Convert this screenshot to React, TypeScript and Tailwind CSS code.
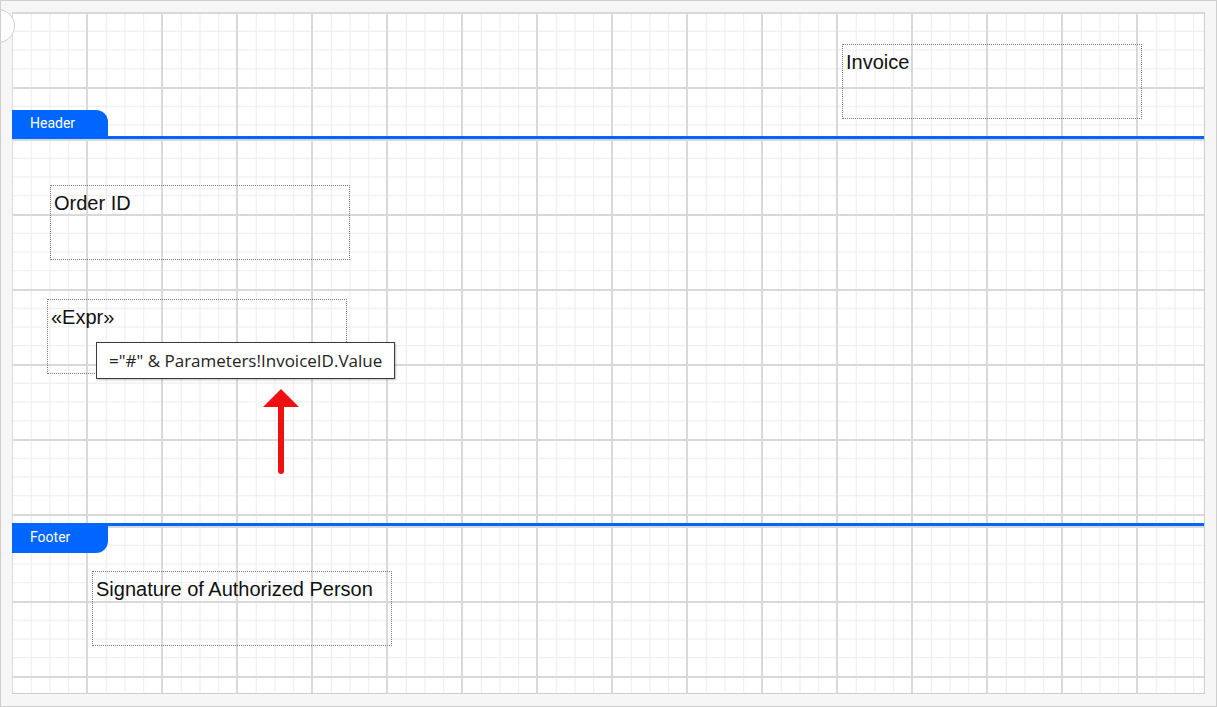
const grid =
  '[background-image:linear-gradient(to_right,#d9d9d9_2px,transparent_2px),linear-gradient(to_bottom,#d9d9d9_2px,transparent_2px),linear-gradient(to_right,#ececec_1px,transparent_1px),linear-gradient(to_bottom,#ececec_1px,transparent_1px)] [background-size:75px_75px,75px_75px,18.75px_18.75px,18.75px_18.75px] [background-position:-1px_0,0_0,0_0,0_0]';

function TextBox({ text, className }: { text: string; className: string }) {
  return (
    <div
      className={`absolute h-[75px] w-[300px] border border-dotted border-[#7a7a7a] pl-[3px] pt-[6px] font-['Liberation_Sans',Arial,sans-serif] text-[20px] leading-[23px] text-[#111] ${className}`}
    >
      {text}
    </div>
  );
}

export default function App() {
  return (
    <div className="relative h-[707px] w-[1217px] overflow-hidden border border-[#cfcfcf] bg-[#f6f6f6] p-[11px]">
      {/* corner handle */}
      <div className="absolute left-[-20px] top-[8px] z-20 h-[34px] w-[34px] rounded-full border border-[#cfcfcf] bg-white" />

      <div className="flex h-[682px] w-[1193px] flex-col border-r border-b border-[#cfcfcf] bg-white">
        {/* Header band */}
        <div className={`relative h-[124px] shrink-0 ${grid}`}>
          <TextBox text="Invoice" className="left-[830px] top-[32px]" />
          <div className="absolute bottom-0 left-0 flex h-[26px] w-[96px] items-center rounded-tr-[12px] bg-[#0066ff] pl-[18px] font-['Roboto',sans-serif] text-[14px] text-white">
            Header
          </div>
        </div>
        <div className="h-[3px] shrink-0 bg-[#0066ff]" />

        {/* Body band */}
        <div className={`relative h-[384px] shrink-0 ${grid}`}>
          <TextBox text="Order ID" className="left-[38px] top-[46px]" />
          <TextBox text="«Expr»" className="left-[35px] top-[160px]" />

          <div className="absolute left-[84px] top-[203px] z-10 flex h-[37px] items-center border border-[#3a3a3a] bg-white px-[12px] font-['Open_Sans',sans-serif] text-[17px] text-[#222] shadow-[1px_1px_2px_rgba(0,0,0,0.25)]">
            ="#" &amp; Parameters!InvoiceID.Value
          </div>

          <svg className="absolute left-[248px] top-[248px]" width="40" height="90" viewBox="0 0 40 90">
            <polygon points="21,2 39,20 3,20" fill="#ee1111" />
            <line x1="21" y1="18" x2="21" y2="84" stroke="#ee1111" strokeWidth="6" strokeLinecap="round" />
          </svg>
        </div>
        <div className="h-[3px] shrink-0 bg-[#0066ff]" />

        {/* Footer band */}
        <div className={`relative min-h-0 flex-1 ${grid}`}>
          <div className="absolute left-0 top-0 flex h-[27px] w-[96px] items-center rounded-br-[12px] bg-[#0066ff] pb-[4px] pl-[18px] font-['Roboto',sans-serif] text-[14px] text-white">
            Footer
          </div>
          <TextBox text="Signature of Authorized Person" className="left-[80px] top-[45px]" />
        </div>
      </div>
    </div>
  );
}
